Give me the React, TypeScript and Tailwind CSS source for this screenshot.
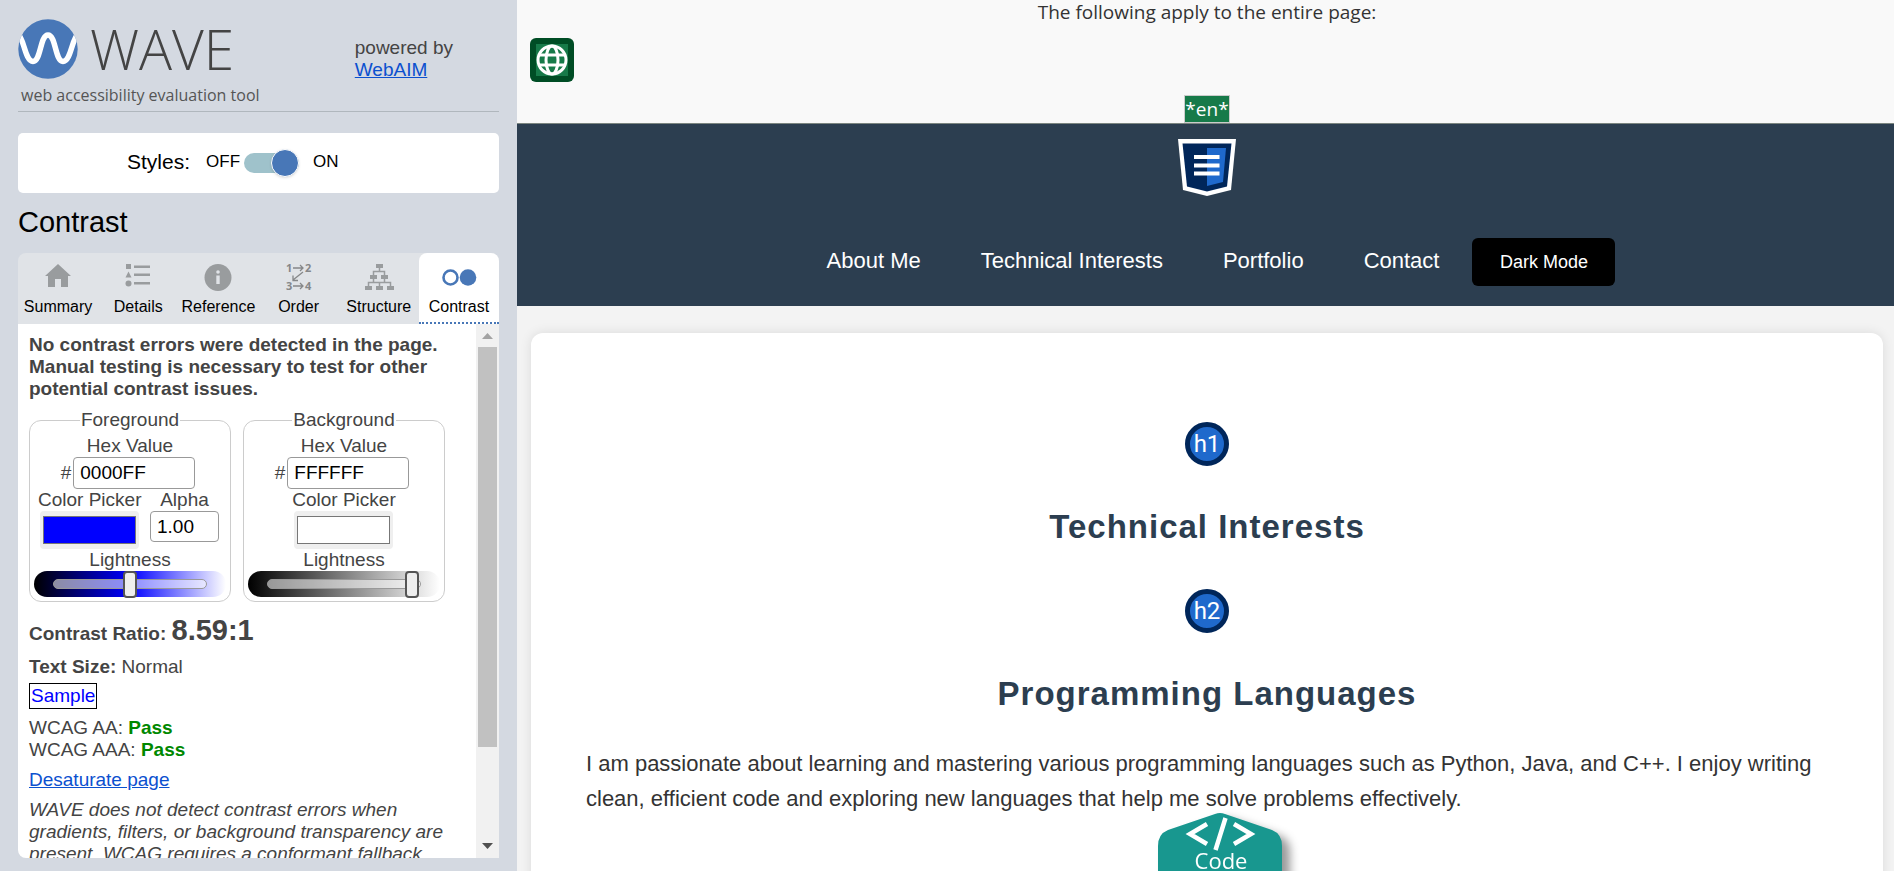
import React from "react";

const tabIcons: Record<string, React.ReactNode> = {
  Summary: (
    <svg width="28" height="28" viewBox="0 0 28 28" fill="#999c9e" aria-hidden="true">
      <path d="M14 1 L27 13 H24 V24 H17 V16 H11 V24 H4 V13 H1 Z" />
    </svg>
  ),
  Details: (
    <svg width="28" height="28" viewBox="0 0 28 28" fill="#999c9e" aria-hidden="true">
      <rect x="2" y="1" width="5" height="5" />
      <path d="M4.500 8.500 L7.500 14.500 H1.500 Z" />
      <circle cx="4.500" cy="20.500" r="3" />
      <rect x="10" y="2.500" width="16" height="2.500" />
      <rect x="10" y="10.500" width="16" height="2.500" />
      <rect x="10" y="19" width="16" height="2.500" />
    </svg>
  ),
  Reference: (
    <svg width="28" height="28" viewBox="0 0 28 28" aria-hidden="true">
      <circle cx="14" cy="14.500" r="13.500" fill="#999c9e" />
      <circle cx="14" cy="9" r="1.800" fill="#e0e3e7" />
      <path d="M12.300 12.500 H15.700 V21 H12.300 Z" fill="#e0e3e7" />
    </svg>
  ),
  Order: (
    <svg width="28" height="28" viewBox="0 0 28 28" className="overflow-visible" aria-hidden="true">
      <g fill="#858789" fontFamily="Open Sans" fontWeight="700" fontSize="11">
        <text x="1" y="9">1</text>
        <text x="20" y="9">2</text>
        <text x="1" y="27">3</text>
        <text x="20" y="27">4</text>
      </g>
      <path d="M8 5 H18 M15 2 L18 5 L15 8 M8 23 H18 M15 20 L18 23 L15 26 M18 9 L8 17 M8 12.500 V17.500 H13" fill="none" stroke="#858789" strokeWidth="1.300" />
    </svg>
  ),
  Structure: (
    <svg width="30" height="28" viewBox="0 0 30 28" aria-hidden="true">
      <g fill="#999c9e">
        <rect x="12" y="1" width="7" height="4" />
        <rect x="6" y="12" width="7" height="4" />
        <rect x="17" y="12" width="7" height="4" />
        <rect x="1" y="23" width="7" height="4" />
        <rect x="12" y="23" width="7" height="4" />
        <rect x="23" y="23" width="7" height="4" />
      </g>
      <path d="M15.500 5 V8.500 M9.500 12 V8.500 H20.500 V12 M9.500 16 V19.500 M20.500 16 V19.500 M4.500 23 V19.500 H26.500 V23 M15.500 19.500 V23" fill="none" stroke="#999c9e" strokeWidth="1.500" />
    </svg>
  ),
  Contrast: (
    <svg width="36" height="28" viewBox="0 0 36 28" aria-hidden="true">
      <circle cx="9.500" cy="14.500" r="7" fill="none" stroke="#4877b7" strokeWidth="2.600" />
      <circle cx="27" cy="14.500" r="8.300" fill="#4877b7" />
    </svg>
  ),
};

function WaveMark() {
  return (
    <svg width="60" height="60" viewBox="0 0 60 60" aria-hidden="true">
      <defs>
        <clipPath id="mark">
          <circle cx="30" cy="30" r="29.700" />
        </clipPath>
      </defs>
      <circle cx="30" cy="30" r="29.700" fill="#4877b7" />
      <path
        clipPath="url(#mark)"
        d="M0 15 C6 19 7 42.500 15 42.500 C23 42.500 22 16 30 16 C38 16 37 42.500 45 42.500 C53 42.500 54 19 60 15"
        fill="none"
        stroke="#fff"
        strokeWidth="5.500"
      />
    </svg>
  );
}

function Tab({ name }: { name: string }) {
  const active = name === "Contrast";
  return (
    <button
      type="button"
      role="tab"
      aria-selected={active}
      className={
        active
          ? "flex min-w-0 flex-1 flex-col items-center rounded-t-lg border-b-2 border-dotted border-[#4877b7] bg-white pt-[10px] text-black"
          : "flex min-w-0 flex-1 flex-col items-center pt-[10px] text-black"
      }
    >
      {tabIcons[name]}
      <span className="mt-[6px] text-base leading-5">{name}</span>
    </button>
  );
}

type PickerProps = {
  id: string;
  title: string;
  hex: string;
  color: string;
  alpha?: string;
  lightness: number;
};

function Picker({ id, title, hex, color, alpha, lightness }: PickerProps) {
  return (
    <fieldset className="h-[193px] w-[202px] rounded-xl border border-[#ccc] px-1 text-center">
      <legend className="mx-auto px-px leading-[22px]">{title}</legend>
      <label htmlFor={id + "-hex"} className="mt-1 block leading-[22px]">
        Hex Value
      </label>
      <div className="flex items-center justify-center gap-[2px] pr-1">
        <span>#</span>
        <input
          id={id + "-hex"}
          defaultValue={hex}
          className="h-8 w-[122px] rounded border border-[#999] bg-white px-[6px] text-black"
        />
      </div>
      <div className={alpha ? "flex justify-between pr-[7px] pl-1" : "flex justify-center"}>
        <div className="flex flex-col items-center">
          <label htmlFor={id + "-color"} className="leading-[22px]">
            Color Picker
          </label>
          <input
            id={id + "-color"}
            type="color"
            defaultValue={color}
            className="h-[38px] w-[99px] rounded bg-[#efefef] px-[3px] py-[5px] [&::-webkit-color-swatch]:border [&::-webkit-color-swatch]:border-[#777] [&::-webkit-color-swatch-wrapper]:p-0"
          />
        </div>
        {alpha && (
          <div className="flex flex-col items-center">
            <label htmlFor={id + "-alpha"} className="leading-[22px]">
              Alpha
            </label>
            <input
              id={id + "-alpha"}
              defaultValue={alpha}
              className="h-[31px] w-[69px] rounded border border-[#999] bg-white px-[6px] text-black"
            />
          </div>
        )}
      </div>
      <label htmlFor={id + "-light"} className="block leading-[22px]">
        Lightness
      </label>
      <div
        className={
          alpha
            ? "flex h-[26px] items-center rounded-full bg-linear-to-r/srgb from-black via-[#00f] to-white px-[19px]"
            : "flex h-[26px] items-center rounded-full bg-linear-to-r/srgb from-black to-white px-[19px]"
        }
      >
        <input
          id={id + "-light"}
          type="range"
          min="0"
          max="100"
          defaultValue={lightness}
          className="h-[10px] w-full appearance-none rounded-full border border-[#999] bg-white/55 [&::-webkit-slider-thumb]:h-[27px] [&::-webkit-slider-thumb]:w-[14px] [&::-webkit-slider-thumb]:appearance-none [&::-webkit-slider-thumb]:rounded [&::-webkit-slider-thumb]:border-2 [&::-webkit-slider-thumb]:border-[#555] [&::-webkit-slider-thumb]:bg-[#eee]"
        />
      </div>
    </fieldset>
  );
}

function Scrollbar() {
  return (
    <div className="flex w-[23px] shrink-0 flex-col items-center justify-between bg-[#f1f1f1]" aria-hidden="true">
      <svg width="23" height="23" viewBox="0 0 23 23">
        <path d="M6 15 L11.500 9 L17 15 Z" fill="#a3a3a3" />
      </svg>
      <div className="min-h-0 w-[19px] flex-1">
        <div className="h-[82%] bg-[#c1c1c1]" />
      </div>
      <svg width="23" height="23" viewBox="0 0 23 23">
        <path d="M6 8 L11.500 14 L17 8 Z" fill="#505050" />
      </svg>
    </div>
  );
}

function Sidebar() {
  return (
    <aside className="flex w-[517px] shrink-0 flex-col bg-[#d4d9e1] px-[18px] pb-[13px] text-[#444]">
      <header className="flex h-28 shrink-0 justify-between border-b border-[#b0b7bd] pt-[19px]">
        <div>
          <div className="flex h-[60px] items-center gap-3">
            <WaveMark />
            <span className="font-['Open_Sans'] text-[55px] leading-[60px] font-light">WAVE</span>
          </div>
          <p className="ml-[3px] pt-1 font-['Open_Sans'] text-base leading-6 text-[#555]">
            web accessibility evaluation tool
          </p>
        </div>
        <p className="mr-[46px] pt-[18px] text-[19px] leading-[22px]">
          powered by
          <br />
          <a href="#webaim" className="text-[#0b50cf] underline">
            WebAIM
          </a>
        </p>
      </header>
      <div className="mt-[21px] flex h-[60px] shrink-0 items-center rounded-[5px] bg-white pl-[109px] text-black">
        <span className="mr-4 pb-[3px] text-[21px]">Styles:</span>
        <span className="mr-1 pb-[3px] text-[17px]">OFF</span>
        <button type="button" role="switch" aria-checked="true" aria-label="Styles" className="flex h-5 w-[55px] items-center justify-end rounded-full bg-[#9fc2cb]">
          <span className="size-7 shrink-0 rounded-full border border-white bg-[#4877b7] shadow" />
        </button>
        <span className="ml-[14px] pb-[3px] text-[17px]">ON</span>
      </div>
      <h1 className="mt-[11px] shrink-0 text-[29px] leading-9 text-black">Contrast</h1>
      <div role="tablist" className="mt-[13px] flex h-[71px] shrink-0 rounded-t-lg bg-[#e0e3e7]">
        {["Summary", "Details", "Reference", "Order", "Structure", "Contrast"].map((name) => (
          <Tab key={name} name={name} />
        ))}
      </div>
      <div className="flex min-h-0 flex-1 overflow-hidden rounded-bl-lg bg-white">
        <div className="min-w-0 flex-1 overflow-hidden px-[11px] pt-[10px] text-[19px] leading-[22px]">
          <p className="font-bold">
            No contrast errors were detected in the page. Manual testing is necessary to test for other potential contrast issues.
          </p>
          <div className="mt-[9px] flex gap-3">
            <Picker id="fg" title="Foreground" hex="0000FF" color="#0000ff" alpha="1.00" lightness={50} />
            <Picker id="bg" title="Background" hex="FFFFFF" color="#ffffff" lightness={99} />
          </div>
          <p className="mt-[10px] leading-9 font-bold">
            Contrast Ratio: <span className="text-[29px]">8.59:1</span>
          </p>
          <p className="mt-1">
            <b>Text Size:</b> Normal
          </p>
          <p className="mt-[5px]">
            <span className="inline-block border border-black px-px leading-6 text-[#00f]">Sample</span>
          </p>
          <p className="mt-2">
            WCAG AA: <b className="text-[#080]">Pass</b>
          </p>
          <p>
            WCAG AAA: <b className="text-[#080]">Pass</b>
          </p>
          <p className="mt-2">
            <a href="#desaturate" className="text-[#0b50cf] underline">
              Desaturate page
            </a>
          </p>
          <p className="mt-2 pr-5 italic">
            WAVE does not detect contrast errors when gradients, filters, or background transparency are present. WCAG requires a conformant fallback
          </p>
        </div>
        <Scrollbar />
      </div>
    </aside>
  );
}

function HeadingBadge({ level }: { level: string }) {
  return (
    <span className="flex size-11 items-center justify-center rounded-full border-[5px] border-[#00265a] bg-[#1f69cc] font-[Roboto] text-2xl leading-none font-normal text-white">
      {level}
    </span>
  );
}

export default function App() {
  return (
    <div className="flex h-screen overflow-hidden font-['Liberation_Sans',Arial,sans-serif]">
      <Sidebar />
      <div className="min-w-0 flex-1 overflow-hidden bg-[#f3f3f3] text-[22px] leading-[35px] text-[#333]">
        <section className="flex h-[123px] flex-col items-center justify-between bg-[#f9f9f9] pl-[3px] font-['Open_Sans'] text-[19px] leading-6">
          <p>The following apply to the entire page:</p>
          <div className="flex w-full items-start px-[10px]">
            <svg width="44" height="44" viewBox="0 0 44 44" role="img" aria-label="Language">
              <rect width="44" height="44" rx="6" fill="#004d25" />
              <rect x="6" y="6" width="32" height="32" fill="#177a49" />
              <g fill="none" stroke="#fff" strokeWidth="3">
                <circle cx="22" cy="22" r="14" />
                <ellipse cx="22" cy="22" rx="6" ry="14" />
                <path d="M9 17 H35 M9 27 H35" />
              </g>
            </svg>
          </div>
          <span className="border border-[#ccc] bg-[#177a49] leading-[26px] text-white">*en*</span>
        </section>
        <header className="flex h-[183px] flex-col items-center border-t border-[#7b8580] bg-[#2c3e50] pt-[15px] pl-[3px] text-white">
          <svg width="58" height="57" viewBox="0 0 58 57" role="img" aria-label="Navigation region">
            <path d="M0 0 H58 L53 51 L29 57 L5 51 Z" fill="#fff" />
            <path d="M4.500 4.500 H53.500 L49 47.500 L29 52.500 L9 47.500 Z" fill="#00265a" />
            <path d="M29 9 H48 L45 43 L29 47 Z" fill="#1f69cc" />
            <path d="M16 18 H41.500 M16 26.500 H41.500 M16 34.500 H41.500" stroke="#fff" strokeWidth="4" />
          </svg>
          <nav className="mt-[42px] flex items-center pl-7">
            <ul className="flex gap-[60px] pb-1">
              <li><a href="#about">About Me</a></li>
              <li><a href="#interests">Technical Interests</a></li>
              <li><a href="#portfolio">Portfolio</a></li>
              <li><a href="#contact">Contact</a></li>
            </ul>
            <button type="button" className="ml-[33px] h-12 w-[143px] rounded-md bg-black text-lg">
              Dark Mode
            </button>
          </nav>
        </header>
        <main className="mt-[27px] mr-[11px] ml-[14px] flex min-h-[600px] flex-col items-center rounded-xl bg-white px-[55px] pt-[89px] shadow-[0_0_12px_rgba(0,0,0,0.1)]">
          <HeadingBadge level="h1" />
          <h1 className="mt-10 text-[33px] leading-[42px] font-bold tracking-[1px] text-[#2c3e50]">Technical Interests</h1>
          <div className="mt-[41px]">
            <HeadingBadge level="h2" />
          </div>
          <h2 className="mt-10 text-[33px] leading-[42px] font-bold tracking-[1px] text-[#2c3e50]">Programming Languages</h2>
          <p className="mt-[31px] w-full">
            I am passionate about learning and mastering various programming languages such as Python, Java, and C++. I enjoy writing clean, efficient code and exploring new languages that help me solve problems effectively.
          </p>
          <svg width="138" height="150" viewBox="0 0 138 150" className="-mt-1 ml-10 shrink-0 drop-shadow-[8px_6px_5px_rgba(0,0,0,0.4)]" role="img" aria-label="Code">
            <path d="M57 2 Q62 0 67 2 L114 18 Q124 22 124 34 V150 H0 V34 Q0 22 10 18 Z" fill="#18978f" />
            <path d="M49 12 L32 22 L49 32 M76 12 L93 22 L76 32 M67.500 6 L57.500 38" fill="none" stroke="#fff" strokeWidth="4.500" />
            <text x="63" y="57" textAnchor="middle" fontFamily="Open Sans" fontSize="22" fill="#fff">Code</text>
          </svg>
        </main>
      </div>
    </div>
  );
}
